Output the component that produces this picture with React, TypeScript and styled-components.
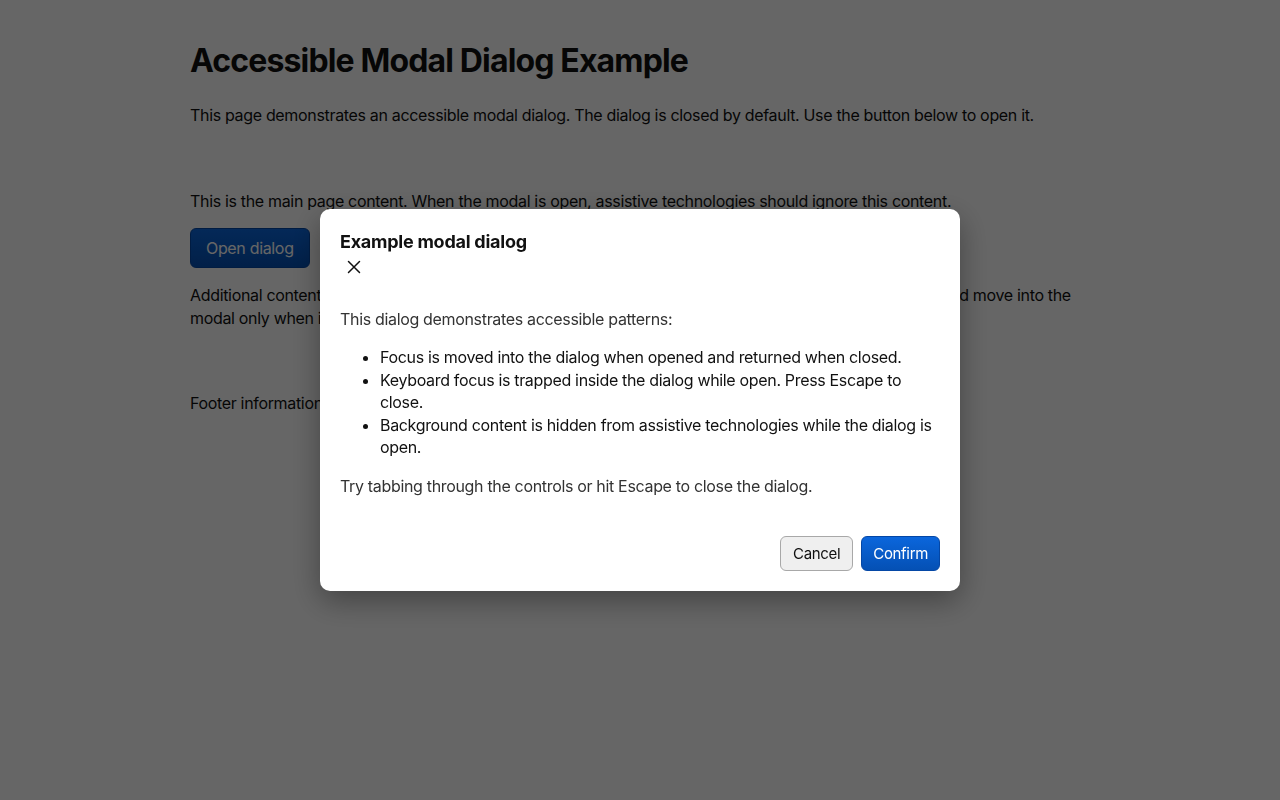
import React from "react";
import styled, { createGlobalStyle } from "styled-components";

const GlobalStyle = createGlobalStyle`
  html, body {
    margin: 0;
    padding: 0;
    background: #ffffff;
    color: #111111;
    font-family: Inter, "Noto Sans", "Liberation Sans", sans-serif;
    font-size: 16px;
    line-height: 1.4;
    letter-spacing: -0.33px;
  }
  * { box-sizing: border-box; }
`;

const Page = styled.main`
  max-width: 900px;
  margin: 0 auto;
  padding: 42px 0 40px;
`;

const Title = styled.h1`
  margin: 0 0 24px;
  font-size: 32px;
  line-height: 38px;
  font-weight: 700;
  letter-spacing: -0.85px;
`;

const Text = styled.p<{ $gap?: number }>`
  margin: 0 0 ${(p) => p.$gap ?? 16}px;
  font-size: 16px;
  line-height: 22.5px;
`;

const PrimaryButton = styled.button<{ $large?: boolean }>`
  font-family: inherit;
  letter-spacing: inherit;
  font-size: ${(p) => (p.$large ? 16 : 15)}px;
  height: ${(p) => (p.$large ? 40 : 35)}px;
  padding: 0 ${(p) => (p.$large ? 15 : 11)}px;
  color: #ffffff;
  background: linear-gradient(#0b66dc, #0450b4);
  border: 1px solid #0447a6;
  border-radius: 6px;
  cursor: pointer;
`;

const SecondaryButton = styled.button`
  font-family: inherit;
  letter-spacing: inherit;
  font-size: 15px;
  height: 35px;
  padding: 0 12px;
  color: #111111;
  background: #efefef;
  border: 1px solid #a8a8a8;
  border-radius: 6px;
  cursor: pointer;
`;

const ButtonRow = styled.div`
  display: flex;
  margin: 0 0 16px;
`;

const Backdrop = styled.div`
  position: fixed;
  inset: 0;
  background: rgba(0, 0, 0, 0.6);
  display: flex;
  align-items: center;
  justify-content: center;
`;

const Dialog = styled.div`
  width: 640px;
  background: #ffffff;
  border-radius: 10px;
  padding: 20px;
  box-shadow: 0 10px 30px rgba(0, 0, 0, 0.35);
`;

const DialogHeader = styled.header`
  display: flex;
  flex-direction: column;
  align-items: flex-start;
`;

const DialogTitle = styled.h2`
  margin: 0;
  font-size: 18px;
  line-height: 25px;
  font-weight: 700;
  letter-spacing: -0.25px;
  color: #111111;
`;

const CloseButton = styled.button`
  width: 28px;
  height: 28px;
  margin-top: -1px;
  padding: 0;
  border: none;
  background: transparent;
  display: flex;
  align-items: center;
  justify-content: center;
  cursor: pointer;
  color: #111111;
`;

const DialogBody = styled.div`
  margin-top: 27px;
  color: #333333;
`;

const DialogText = styled.p`
  margin: 0 0 16px;
  font-size: 16px;
  line-height: 22.5px;
`;

const List = styled.ul`
  margin: 0 0 16px;
  padding-left: 40px;
  color: #111111;
  li {
    font-size: 16px;
    line-height: 22.5px;
  }
`;

const DialogFooter = styled.footer`
  display: flex;
  justify-content: flex-end;
  gap: 8px;
  margin-top: 39px;
`;

const CloseIcon = () => (
  <svg width="14" height="14" viewBox="0 0 14 14" aria-hidden="true">
    <path d="M1.5 1.5 L12.5 12.5 M12.5 1.5 L1.5 12.5" stroke="currentColor" strokeWidth="1.5" strokeLinecap="round" />
  </svg>
);

export default function App() {
  return (
    <>
      <GlobalStyle />
      <Page aria-hidden="true">
        <Title>Accessible Modal Dialog Example</Title>
        <Text $gap={63}>
          This page demonstrates an accessible modal dialog. The dialog is closed by default. Use the button below to open it.
        </Text>
        <Text>
          This is the main page content. When the modal is open, assistive technologies should ignore this content.
        </Text>
        <ButtonRow>
          <PrimaryButton $large>Open dialog</PrimaryButton>
        </ButtonRow>
        <Text $gap={63}>
          Additional content with links and controls lives right here. Keyboard focus should stay on the main page and move
          into the modal only when it is open.
        </Text>
        <Text>Footer information and links for the example page.</Text>
      </Page>
      <Backdrop>
        <Dialog role="dialog" aria-modal="true" aria-labelledby="dialog-title">
          <DialogHeader>
            <DialogTitle id="dialog-title">Example modal dialog</DialogTitle>
            <CloseButton aria-label="Close dialog">
              <CloseIcon />
            </CloseButton>
          </DialogHeader>
          <DialogBody>
            <DialogText>This dialog demonstrates accessible patterns:</DialogText>
            <List>
              <li>Focus is moved into the dialog when opened and returned when closed.</li>
              <li>Keyboard focus is trapped inside the dialog while open. Press Escape to close.</li>
              <li>Background content is hidden from assistive technologies while the dialog is open.</li>
            </List>
            <DialogText>Try tabbing through the controls or hit Escape to close the dialog.</DialogText>
          </DialogBody>
          <DialogFooter>
            <SecondaryButton>Cancel</SecondaryButton>
            <PrimaryButton>Confirm</PrimaryButton>
          </DialogFooter>
        </Dialog>
      </Backdrop>
    </>
  );
}
